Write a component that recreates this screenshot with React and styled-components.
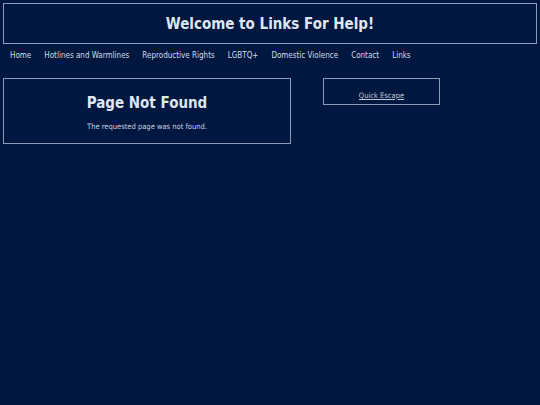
import React from 'react';
import styled, { createGlobalStyle } from 'styled-components';

const Global = createGlobalStyle`
  html, body {
    margin: 0;
    background: #001740;
    font-family: "DejaVu Sans Condensed", "DejaVu Sans", Verdana, sans-serif;
    font-stretch: condensed;
    color: #d6deea;
  }
  body {
    padding: 3px;
  }
`;

const Header = styled.header`
  border: 1px solid #8c9cb8;
  height: 39px;
  display: flex;
  align-items: center;
  justify-content: center;
`;

const Title = styled.h1`
  margin: 0;
  font-size: 15px;
  font-weight: bold;
  color: #dfe6f1;
`;

const Nav = styled.nav`
  display: flex;
  gap: 13px;
  padding: 7px 7px 0;
  height: 19px;
`;

const NavLink = styled.a`
  font-size: 8px;
  color: #d6deea;
  text-decoration: none;
`;

const Main = styled.div`
  display: flex;
  align-items: flex-start;
  margin-top: 8px;
`;

const Card = styled.section`
  width: 286px;
  height: 64px;
  border: 1px solid #8c9cb8;
  text-align: center;
`;

const CardTitle = styled.h2`
  margin: 15px 0 0;
  font-size: 15px;
  font-weight: bold;
  color: #dfe6f1;
`;

const CardText = styled.p`
  margin: 10px 0 0;
  font-size: 7.5px;
  color: #c9d2e0;
`;

const Escape = styled.div`
  margin-left: 32px;
  width: 117px;
  height: 27px;
  border: 1px solid #8c9cb8;
  display: flex;
  align-items: flex-end;
  justify-content: center;
  padding-bottom: 4px;
  box-sizing: border-box;
`;

const EscapeLink = styled.a`
  font-size: 7.5px;
  color: #c2cada;
  text-decoration: underline;
`;

const links = ['Home', 'Hotlines and Warmlines', 'Reproductive Rights', 'LGBTQ+', 'Domestic Violence', 'Contact', 'Links'];

export default function App() {
  return (
    <>
      <Global />
      <Header>
        <Title>Welcome to Links For Help!</Title>
      </Header>
      <Nav>
        {links.map((l) => (
          <NavLink key={l} href="#">{l}</NavLink>
        ))}
      </Nav>
      <Main>
        <Card>
          <CardTitle>Page Not Found</CardTitle>
          <CardText>The requested page was not found.</CardText>
        </Card>
        <Escape>
          <EscapeLink href="#">Quick Escape</EscapeLink>
        </Escape>
      </Main>
    </>
  );
}
